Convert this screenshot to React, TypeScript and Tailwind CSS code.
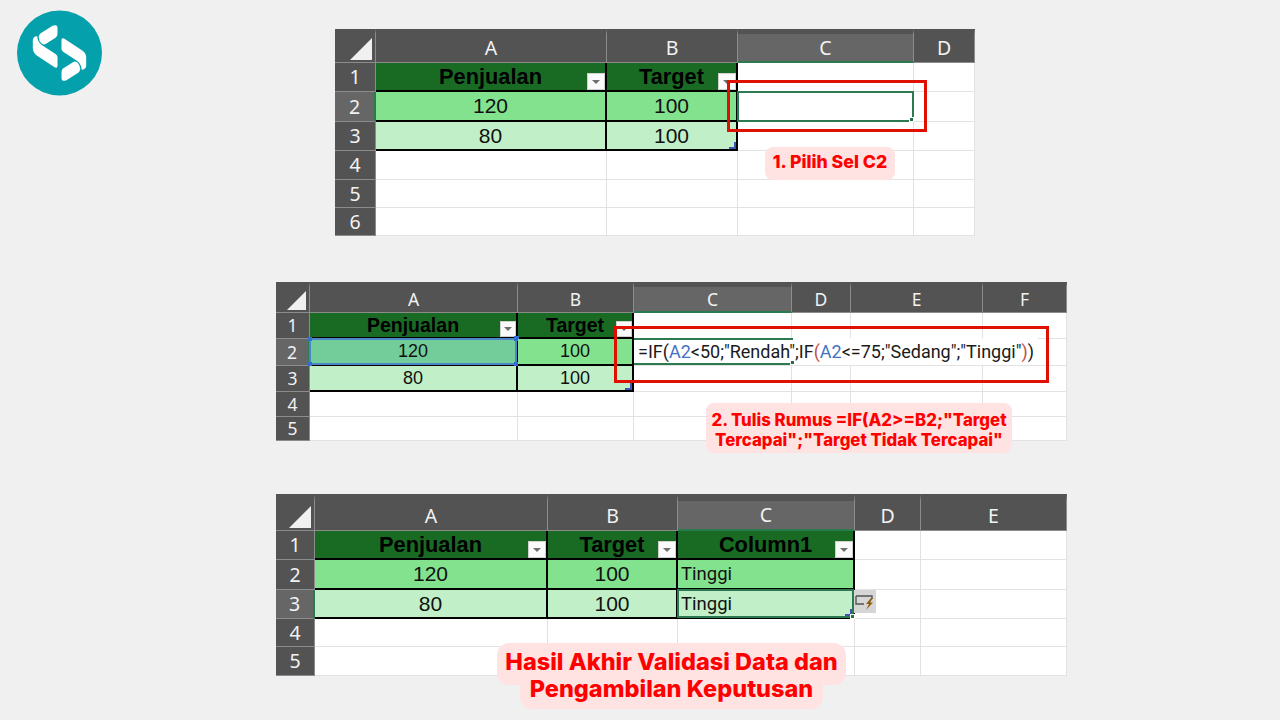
import React from 'react';

type CellKind = 'head' | 'high' | 'picked' | 'low' | 'blank';

interface CellDef {
  text?: string;
  kind: CellKind;
  left?: boolean;
  filter?: boolean;
  extra?: React.ReactNode;
}

interface SheetProps {
  gridClass: string;
  letters: string[];
  activeCol: number;
  activeRow: number;
  rows: CellDef[][];
  headFont: string;
  bodyFont: string;
  labelFont: string;
  bandClass: string;
  filterClass: string;
  cornerClass: string;
}

const Logo = () => (
  <svg viewBox="0 0 86 86" className="absolute left-[17px] top-[10px] w-[85px] h-[86px]">
    <circle cx="43" cy="43" r="43" fill="#04a0ac" />
    <g fill="#fff" transform="translate(-16 -10)">
      <path d="M40 33 L52 25.5 Q57 23.5 57 28 L57 34 Q57 36 55 37.5 L45 44 Q43 45 41 43.5 Q38 41 38 37 Q38 34.500 40 33 Z" />
      <path d="M35.500 36 L36.500 36 Q36.500 41 41 45 L55 54 Q57 55.500 57 57 L57 66 Q57 69 54 67.500 L36 55.500 Q32 53 32 48 L32 40 Q32 37 35.500 36 Z" />
      <g transform="rotate(180 59 53)">
        <path d="M40 33 L52 25.5 Q57 23.5 57 28 L57 34 Q57 36 55 37.5 L45 44 Q43 45 41 43.5 Q38 41 38 37 Q38 34.500 40 33 Z" />
        <path d="M35.500 36 L36.500 36 Q36.500 41 41 45 L55 54 Q57 55.500 57 57 L57 66 Q57 69 54 67.500 L36 55.500 Q32 53 32 48 L32 40 Q32 37 35.500 36 Z" />
      </g>
    </g>
  </svg>
);

const FilterButton = ({ className }: { className: string }) => (
  <span className={`absolute right-0 bottom-0 bg-[#fafafa] border border-[#d0d0d0] flex items-center justify-center ${className}`}>
    <span className="w-0 h-0 border-l-[4px] border-r-[4px] border-t-[4px] border-l-transparent border-r-transparent border-t-[#6e6e6e]" />
  </span>
);

const ResizeCorner = () => (
  <svg viewBox="0 0 7 7" className="absolute right-0 bottom-0 w-[7px] h-[7px]">
    <path d="M0 7 L0 5 L5 5 L5 0 L7 0 L7 7 Z" fill="#4053b0" />
  </svg>
);

const kindClass: Record<CellKind, string> = {
  head: 'bg-[#196b24] font-bold text-black border-r-2 border-b-2 border-r-black border-b-black pt-[2px]',
  high: 'bg-[#83e28e] text-[#111] border-r-2 border-b-2 border-r-black border-b-black',
  picked: 'bg-[#72cd9a] text-[#111] border-r-2 border-b-2 border-r-black border-b-black',
  low: 'bg-[#c1f0c8] text-[#111] border-r-2 border-b-2 border-r-black border-b-black',
  blank: 'bg-white border-r border-b border-r-[#e2e2e2] border-b-[#e2e2e2]',
};

const Sheet = ({ gridClass, letters, activeCol, activeRow, rows, headFont, bodyFont, labelFont, bandClass, filterClass, cornerClass }: SheetProps) => (
  <div className={`grid w-fit ${gridClass} font-['Noto_Sans',sans-serif]`}>
    <div className={`bg-[#535353] border-r border-b border-r-[#8c8c8c] border-b-[#8c8c8c] flex items-end justify-end pr-[3px] pb-[2px] ${bandClass}`}>
      <svg viewBox="0 0 22 22" className={cornerClass}>
        <polygon points="22,0 22,22 0,22" fill="#f0f0f0" />
      </svg>
    </div>
    {letters.map((letter, i) => (
      <div
        key={letter}
        className={`flex items-center justify-center text-[#f2f2f2] border-r border-r-[#8c8c8c] border-b ${labelFont} ${bandClass} ${
          i === activeCol ? 'bg-[#666666] border-b-2 border-b-[#2c7a50]' : 'bg-[#535353] border-b-[#8c8c8c]'
        }`}
      >
        {letter}
      </div>
    ))}
    {rows.map((row, r) => (
      <React.Fragment key={r}>
        <div
          className={`flex items-center justify-center text-[#f2f2f2] border-b border-b-[#8c8c8c] ${labelFont} ${
            r === activeRow ? 'bg-[#666666] border-r-2 border-r-[#2c7a50]' : 'bg-[#535353] border-r border-r-[#8c8c8c]'
          }`}
        >
          {r + 1}
        </div>
        {row.map((cell, c) => (
          <div
            key={c}
            className={`relative flex items-center ${cell.left ? 'justify-start pl-[3px] pt-[2px]' : 'justify-center'} ${kindClass[cell.kind]} ${
              cell.kind === 'head' ? `${headFont} font-['Liberation_Sans',sans-serif]` : cell.left ? "font-['Roboto',sans-serif] text-[18.500px]" : `${bodyFont} font-['Liberation_Sans',sans-serif]`
            }`}
          >
            {cell.text}
            {cell.filter && <FilterButton className={filterClass} />}
            {cell.extra}
          </div>
        ))}
      </React.Fragment>
    ))}
  </div>
);

const Handle = () => <span className="absolute right-[-2px] bottom-[-2px] w-[5px] h-[5px] bg-[#217346] border border-white" />;

const blankRow = (n: number): CellDef[] => Array.from({ length: n }, () => ({ kind: 'blank' as CellKind }));

const firstRows: CellDef[][] = [
  [{ text: 'Penjualan', kind: 'head', filter: true }, { text: 'Target', kind: 'head', filter: true }, ...blankRow(2)],
  [
    { text: '120', kind: 'high' },
    { text: '100', kind: 'high' },
    { kind: 'blank', extra: <span className="absolute inset-[-1px] border-2 border-[#2c7a50]"><Handle /></span> },
    { kind: 'blank' },
  ],
  [{ text: '80', kind: 'low' }, { text: '100', kind: 'low', extra: <ResizeCorner /> }, ...blankRow(2)],
  blankRow(4),
  blankRow(4),
  blankRow(4),
];

const Formula = () => (
  <div className="absolute left-0 top-[-1px] z-10 w-[404px] h-[27px] bg-white flex items-center pl-[4px] font-['Roboto',sans-serif] text-[18px] text-[#1a1a1a] whitespace-nowrap">
    <span className="absolute left-0 top-0 w-[159px] h-full border-y-2 border-[#2c7a50]">
      <Handle />
    </span>
    <span className="relative">
      =IF(<span className="text-[#4472c4]">A2</span>&lt;50;"Rendah";IF<span className="text-[#c0504d]">(</span><span className="text-[#4472c4]">A2</span>&lt;=75;"Sedang";"Tinggi"<span className="text-[#c0504d]">)</span>)
    </span>
  </div>
);

const SelectedA2 = () => (
  <>
    <span className="absolute inset-[-1px] border-2 border-[#4a86c8]" />
    <span className="absolute left-[-2px] top-[-2px] w-[4px] h-[4px] bg-[#2f6fd0]" />
    <span className="absolute right-[-3px] top-[-3px] w-[5px] h-[5px] bg-[#2f6fd0]" />
    <span className="absolute left-[-2px] bottom-[-2px] w-[4px] h-[4px] bg-[#2f6fd0]" />
    <span className="absolute right-[-3px] bottom-[-3px] w-[5px] h-[5px] bg-[#2f6fd0]" />
  </>
);

const secondRows: CellDef[][] = [
  [{ text: 'Penjualan', kind: 'head', filter: true }, { text: 'Target', kind: 'head', filter: true }, ...blankRow(4)],
  [
    { text: '120', kind: 'picked', extra: <SelectedA2 /> },
    { text: '100', kind: 'high' },
    { kind: 'blank', extra: <Formula /> },
    ...blankRow(3),
  ],
  [{ text: '80', kind: 'low' }, { text: '100', kind: 'low', extra: <ResizeCorner /> }, ...blankRow(4)],
  blankRow(6),
  blankRow(6),
];

const FlashFill = () => (
  <svg viewBox="0 0 22 23" className="absolute left-[100%] top-0 ml-[1px] z-10 w-[22px] h-[23px]">
    <rect width="22" height="23" fill="#d6d6d6" />
    <path d="M2 6 H18 V9 M2 6 V14 H10" fill="none" stroke="#555" strokeWidth="1.4" />
    <path d="M17 8 L12 14 H15 L12 20 L19 12.500 H16 L19 8 Z" fill="#8f5c12" />
  </svg>
);

const thirdRows: CellDef[][] = [
  [{ text: 'Penjualan', kind: 'head', filter: true }, { text: 'Target', kind: 'head', filter: true }, { text: 'Column1', kind: 'head', filter: true }, ...blankRow(2)],
  [{ text: '120', kind: 'high' }, { text: '100', kind: 'high' }, { text: 'Tinggi', kind: 'high', left: true }, ...blankRow(2)],
  [
    { text: '80', kind: 'low' },
    { text: '100', kind: 'low' },
    {
      text: 'Tinggi',
      kind: 'low',
      left: true,
      extra: (
        <>
          <span className="absolute inset-[-1px] border-2 border-[#2c7a50]" />
          <span className="absolute right-[1px] bottom-[1px]"><ResizeCorner /></span>
          <Handle />
          <FlashFill />
        </>
      ),
    },
    ...blankRow(2),
  ],
  blankRow(5),
  blankRow(5),
];

const pillClass = "bg-[#ffe3e3] text-[#ff0000] font-extrabold font-['Inter',sans-serif] text-center";

const App = () => (
  <div className="relative w-[1280px] h-[720px] overflow-hidden bg-[#f0f0f0] pt-[29px]">
    <Logo />

    <div className="ml-[335px]">
      <Sheet
        gridClass="grid-cols-[41px_231px_131px_176px_61px] grid-rows-[34px_29px_30px_29px_29px_28px_28px]"
        letters={['A', 'B', 'C', 'D']}
        activeCol={2}
        activeRow={1}
        rows={firstRows}
        headFont="text-[21.800px]"
        bodyFont="text-[21px]"
        labelFont="text-[19.500px]"
        bandClass="border-t-[5px] border-t-[#535353]"
        filterClass="w-[18px] h-[17px]"
        cornerClass="w-[22px] h-[22px]"
      />
    </div>

    <div className="ml-[276px] mt-[46px]">
      <Sheet
        gridClass="grid-cols-[34px_208px_116px_158px_59px_132px_84px] grid-rows-[31px_26px_27px_26px_25px_24px]"
        letters={['A', 'B', 'C', 'D', 'E', 'F']}
        activeCol={2}
        activeRow={1}
        rows={secondRows}
        headFont="text-[19.500px]"
        bodyFont="text-[18px]"
        labelFont="text-[17.500px]"
        bandClass="border-t-[5px] border-t-[#535353]"
        filterClass="w-[16px] h-[16px]"
        cornerClass="w-[19px] h-[19px]"
      />
    </div>

    <div className="ml-[276px] mt-[53px]">
      <Sheet
        gridClass="grid-cols-[39px_233px_130px_177px_66px_146px] grid-rows-[37px_29px_30px_29px_28px_29px]"
        letters={['A', 'B', 'C', 'D', 'E']}
        activeCol={2}
        activeRow={2}
        rows={thirdRows}
        headFont="text-[21.800px]"
        bodyFont="text-[21px]"
        labelFont="text-[19.500px]"
        bandClass="border-t-[7px] border-t-[#535353]"
        filterClass="w-[18px] h-[17px]"
        cornerClass="w-[22px] h-[22px]"
      />
    </div>

    <div className="absolute left-[727px] top-[80px] w-[200px] h-[52px] border-[3px] border-[#e01000]" />
    <div className="absolute left-[614px] top-[326px] w-[435px] h-[57px] border-[3px] border-[#e01000] z-20" />

    <div className={`${pillClass} absolute rounded-[8px] left-[765px] top-[147px] w-[130px] h-[33px] leading-[29px] text-[17.700px]`}>1. Pilih Sel C2</div>
    <div className={`${pillClass} absolute rounded-[8px] left-[706px] top-[403px] w-[306px] h-[50px] pt-[7px] leading-[20px] text-[16.800px]`}>
      2. Tulis Rumus =IF(A2&gt;=B2;"Target
      <br />
      Tercapai";"Target Tidak Tercapai"
    </div>

    <div className="absolute left-[497px] top-[643px] w-[349px] flex flex-col items-center text-[23.500px]">
      <div className={`${pillClass} w-[349px] h-[42px] leading-[38px] rounded-[12px]`}>Hasil Akhir Validasi Data dan</div>
      <div className={`${pillClass} w-[303px] h-[24px] leading-[8px] rounded-b-[12px]`}>Pengambilan Keputusan</div>
    </div>
  </div>
);

export default App;
